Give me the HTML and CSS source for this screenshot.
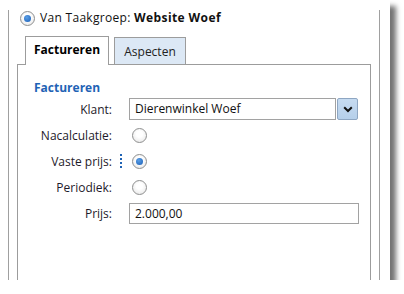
FILE: index.html
```html
<!DOCTYPE html>
<html>
	<head>
		<meta charset="UTF-8">
		<title>Factureren</title>
		<link rel="stylesheet" href="styles.css">
	</head>
	<body>
		<div class="window">
			<div class="frame">
				<div class="source">
					<span class="radio checked"></span>
					<span class="source-text">Van Taakgroep: <b>Website Woef</b></span>
				</div>
				<div class="tabs">
					<div class="tab active">Factureren</div>
					<div class="tab">Aspecten</div>
				</div>
				<div class="panel">
					<div class="heading">Factureren</div>
					<div class="form">
						<div class="label">Klant:</div>
						<div></div>
						<div class="combo">
							<div class="field">Dierenwinkel Woef</div>
							<div class="drop">
								<svg width="10" height="7" viewBox="0 0 10 7"><path d="M1.2 1.3 L5 5 L8.8 1.3" stroke="#111" stroke-width="2" fill="none"/></svg>
							</div>
						</div>

						<div class="label">Nacalculatie:</div>
						<div></div>
						<div><span class="radio"></span></div>

						<div class="label">Vaste prijs:</div>
						<div class="marker"><span class="dots"></span></div>
						<div><span class="radio checked"></span></div>

						<div class="label">Periodiek:</div>
						<div></div>
						<div><span class="radio"></span></div>

						<div class="label">Prijs:</div>
						<div></div>
						<div class="field price">2.000,00</div>
					</div>
				</div>
			</div>
		</div>
	</body>
</html>
```

FILE: styles.css
```css
*{
	margin: 0;
	padding: 0;
	box-sizing: border-box;
}
body{
	background-color: #fff;
	font-family: "Open Sans", "Noto Sans", sans-serif;
	font-size: 12px;
	color: #222;
}
.window{
	width: 390px;
	height: 280px;
	background-color: #fff;
	overflow: hidden;
	box-shadow: 6px 6px 5px rgba(0, 0, 0, 0.55);
}
.frame{
	width: 372px;
	height: 280px;
	margin-left: 8px;
	border-left: 1px solid #a0a0a0;
	border-right: 1px solid #a0a0a0;
}
.source{
	display: flex;
	align-items: center;
	height: 16px;
	margin-top: 10px;
	padding-left: 11px;
	line-height: 16px;
}
.source-text{
	margin-left: 5px;
	color: #111;
	letter-spacing: 0.3px;
}
.source-text b{
	letter-spacing: 0.4px;
}
.radio{
	display: flex;
	align-items: center;
	justify-content: center;
	width: 15px;
	height: 15px;
	border-radius: 50%;
	border: 1px solid #8e8f8f;
	background: radial-gradient(circle at 50% 40%, #fff 30%, #e2e2e2 100%);
}
.radio.checked::after{
	content: "";
	width: 7px;
	height: 7px;
	border-radius: 50%;
	background: radial-gradient(circle at 40% 35%, #5a9fe6, #1a5db5);
}
.tabs{
	display: flex;
	align-items: flex-end;
	gap: 5px;
	height: 28px;
	margin-top: 10px;
	margin-left: 16px;
}
.tab{
	height: 27px;
	width: 72px;
	padding-top: 6px;
	text-align: center;
	line-height: 16px;
	border: 1px solid #9c9c9c;
	border-bottom: none;
	background-color: #dce8f5;
	color: #222;
}
.tab.active{
	position: relative;
	width: 84px;
	height: 29px;
	margin-bottom: -1px;
	padding-top: 5px;
	background-color: #fff;
	font-weight: bold;
	color: #000;
}
.panel{
	height: 240px;
	margin: 0 8px;
	border: 1px solid #9c9c9c;
	padding-top: 15px;
}
.heading{
	margin-left: 16px;
	line-height: 16px;
	font-weight: bold;
	color: #1f63b5;
}
.form{
	display: grid;
	grid-template-columns: 94px 17px 230px;
	grid-auto-rows: 26px;
	align-items: center;
}
.label{
	text-align: right;
	color: #1e1a2a;
}
.form .radio{
	margin-left: 3px;
}
.marker{
	display: flex;
	justify-content: center;
}
.dots{
	width: 2px;
	height: 14px;
	background: repeating-linear-gradient(#1f63b5 0 2px, transparent 2px 4px);
}
.combo{
	display: flex;
	width: 229px;
}
.field{
	flex: 1;
	height: 22px;
	padding-left: 5px;
	line-height: 20px;
	border: 1px solid #a2a2a2;
	color: #111;
	background-color: #fff;
}
.field.price{
	height: 21px;
	line-height: 19px;
}
.drop{
	display: flex;
	align-items: center;
	justify-content: center;
	width: 21px;
	height: 22px;
	margin-left: 1px;
	border: 1px solid #8ea6c2;
	border-radius: 2px;
	background: linear-gradient(#c6dbf1, #b5cfea);
}
```
